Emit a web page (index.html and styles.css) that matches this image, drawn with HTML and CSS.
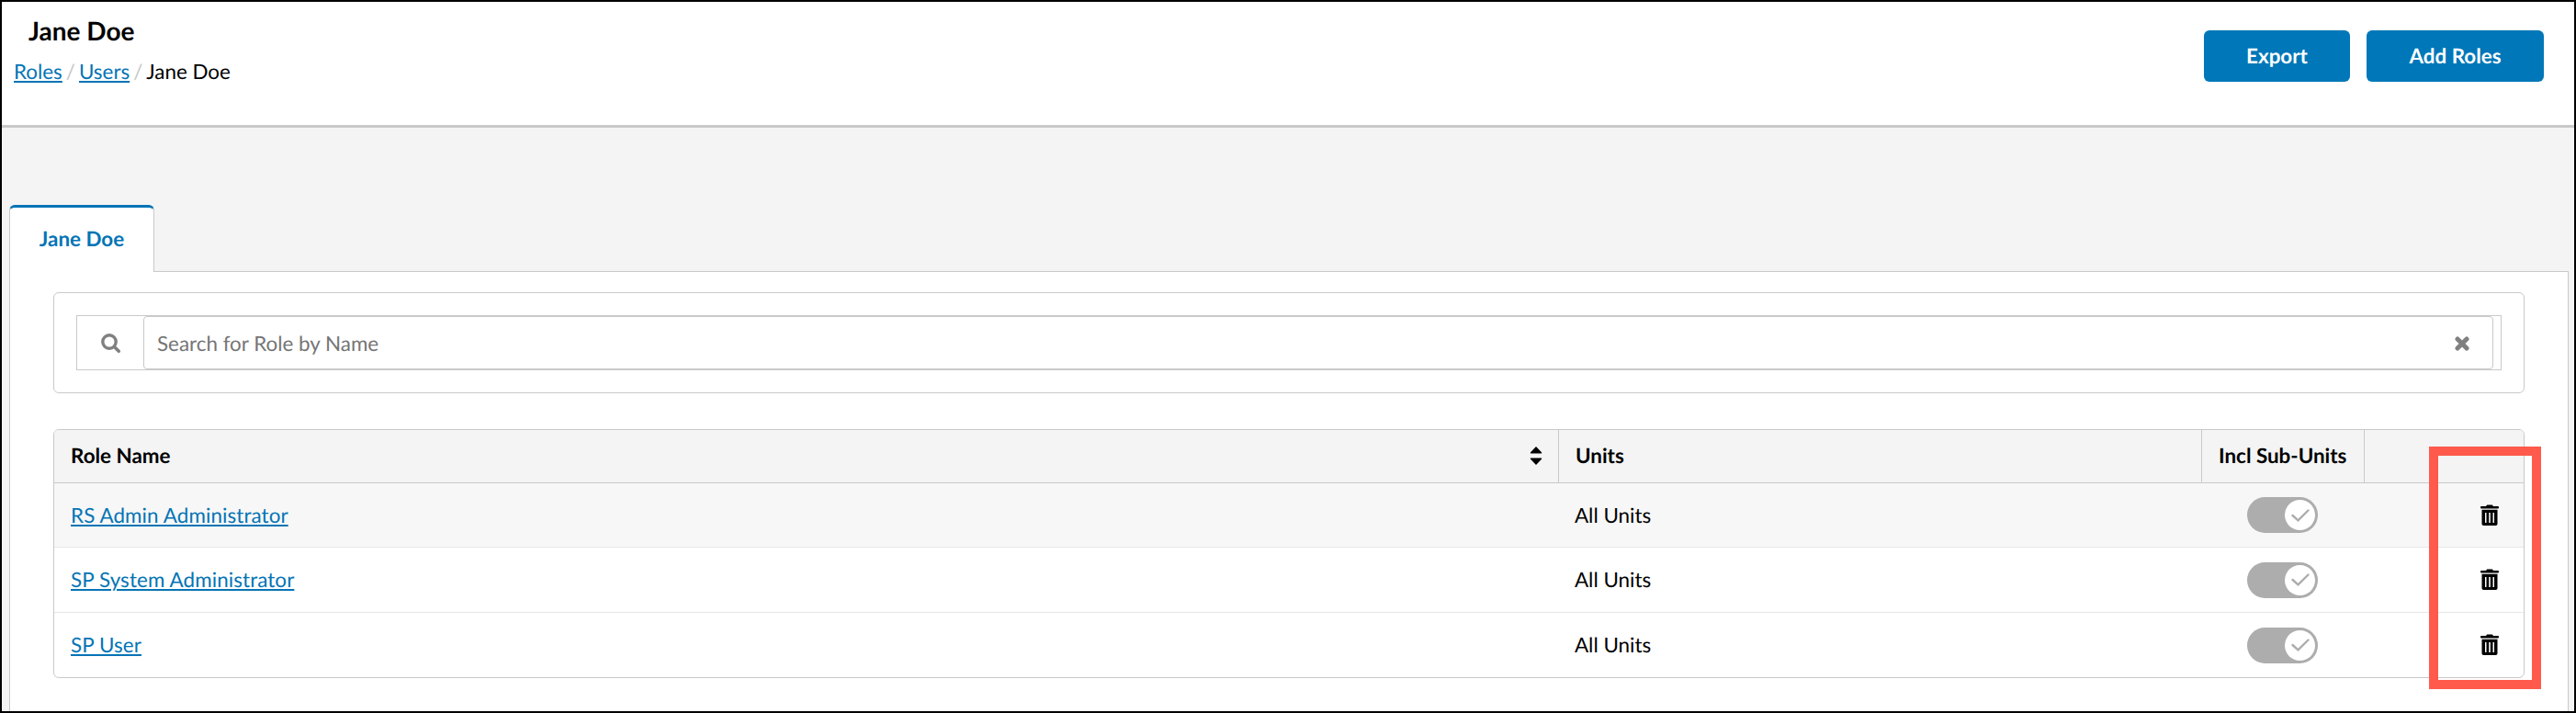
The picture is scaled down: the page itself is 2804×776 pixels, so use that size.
FILE: index.html
```html
<!DOCTYPE html>
<html lang="en">
<head>
    <meta charset="utf-8">
    <title>Jane Doe</title>
    <link rel="stylesheet" href="styles.css">
</head>
<body>
    <svg class="sprite" width="0" height="0">
        <symbol id="icon-trash" viewBox="0 0 20 23">
            <path d="M1 1.9h5L7.2.4h5.6L14 1.9h5a1 1 0 0 1 1 1v.6a1 1 0 0 1-1 1H1a1 1 0 0 1-1-1v-.6a1 1 0 0 1 1-1z"/>
            <path fill-rule="evenodd" d="M1.5 5.8h17v15.4a1.8 1.8 0 0 1-1.8 1.8H3.300a1.8 1.8 0 0 1-1.800-1.8zM5 9v11h1.500V9zm4.200 0v11h1.600V9zm4.300 0v11H15V9z"/>
        </symbol>
        <symbol id="icon-check" viewBox="0 0 20 14">
            <path d="M1.500 7l6 5.300L18.500 1.500" fill="none" stroke="currentColor" stroke-width="2.400" stroke-linecap="round"/>
        </symbol>
    </svg>

    <div class="page">
        <header class="header">
            <div class="heading">
                <h1>Jane Doe</h1>
                <nav class="breadcrumb">
                    <a href="#">Roles</a><span class="slash">/</span><a href="#">Users</a><span class="slash">/</span><span>Jane Doe</span>
                </nav>
            </div>
            <div class="actions">
                <button class="btn btn-export" type="button">Export</button>
                <button class="btn btn-add" type="button">Add Roles</button>
            </div>
        </header>

        <main class="content">
            <div class="tabs">
                <a class="tab">Jane Doe</a>
            </div>
            <div class="panel">
                <div class="search-card">
                    <div class="search">
                        <div class="search-icon">
                            <svg width="22" height="22" viewBox="0 0 22 22">
                                <circle cx="9" cy="9" r="7.2" fill="none" stroke="#808080" stroke-width="3.400"/>
                                <path d="M14.500 14.500l4.800 4.800" stroke="#808080" stroke-width="3.600" stroke-linecap="round"/>
                            </svg>
                        </div>
                        <div class="search-field">
                            <input type="text" placeholder="Search for Role by Name">
                            <svg width="16" height="16" viewBox="0 0 16 16">
                                <path d="M3 3l10 10M13 3L3 13" stroke="#808080" stroke-width="5" stroke-linecap="round"/>
                            </svg>
                        </div>
                    </div>
                </div>

                <div class="table">
                    <div class="row row-head">
                        <div class="cell">
                            Role Name
                            <svg class="sort" width="14" height="20" viewBox="0 0 14 20">
                                <path d="M7 0l6 6.200q.8 1.200-.5 1.200h-11Q.2 7.400 1 6.200zM7 20l6-6.200q.8-1.200-.5-1.200h-11q-1.300 0-.5 1.200z"/>
                            </svg>
                        </div>
                        <div class="cell">Units</div>
                        <div class="cell">Incl Sub-Units</div>
                        <div class="cell"></div>
                    </div>
                    <div class="row row-shaded">
                        <div class="cell"><a href="#">RS Admin Administrator</a></div>
                        <div class="cell">All Units</div>
                        <div class="cell cell-toggle"><span class="toggle"><span class="knob"><svg width="20" height="14"><use href="#icon-check"/></svg></span></span></div>
                        <div class="cell cell-delete"><svg width="20" height="23"><use href="#icon-trash"/></svg></div>
                    </div>
                    <div class="row">
                        <div class="cell"><a href="#">SP System Administrator</a></div>
                        <div class="cell">All Units</div>
                        <div class="cell cell-toggle"><span class="toggle"><span class="knob"><svg width="20" height="14"><use href="#icon-check"/></svg></span></span></div>
                        <div class="cell cell-delete"><svg width="20" height="23"><use href="#icon-trash"/></svg></div>
                    </div>
                    <div class="row">
                        <div class="cell"><a href="#">SP User</a></div>
                        <div class="cell">All Units</div>
                        <div class="cell cell-toggle"><span class="toggle"><span class="knob"><svg width="20" height="14"><use href="#icon-check"/></svg></span></span></div>
                        <div class="cell cell-delete"><svg width="20" height="23"><use href="#icon-trash"/></svg></div>
                    </div>
                    <div class="highlight"></div>
                </div>
            </div>
        </main>
    </div>
</body>
</html>
```

FILE: styles.css
```css
* {
    box-sizing: border-box;
}
body {
    margin: 0;
    font-family: Lato, "Liberation Sans", sans-serif;
    font-size: 22.4px;
    line-height: 28px;
    color: #000;
    text-rendering: geometricPrecision;
}
a {
    color: #0374b5;
    text-decoration-thickness: 2px;
    text-underline-offset: 2px;
}
svg {
    display: block;
    flex: none;
}
.sprite {
    position: absolute;
}
.page {
    display: flex;
    flex-direction: column;
    height: 776px;
    border: 2px solid #000;
    background: #f4f4f4;
    overflow: hidden;
}

/* Header */
.header {
    display: flex;
    justify-content: space-between;
    height: 137px;
    padding: 13px 33px 0 13px;
    background: #fff;
    border-bottom: 3px solid #c9c9c9;
}
h1 {
    margin: 0 0 13px 16px;
    font-size: 28px;
    line-height: 36px;
    font-weight: 700;
}
.breadcrumb {
    display: flex;
}
.slash {
    margin: 0 4px;
    color: #c7c7c7;
}
.actions {
    display: flex;
    gap: 18px;
    padding-top: 18px;
}
.btn {
    height: 56px;
    padding: 0 0 2px;
    border: 0;
    border-radius: 6px;
    background: #0077b8;
    color: #fff;
    font-family: inherit;
    font-size: 22.4px;
    font-weight: 700;
    text-rendering: inherit;
}
.btn-export {
    width: 159px;
}
.btn-add {
    width: 193px;
}

/* Tabs */
.content {
    display: flex;
    flex-direction: column;
    flex: 1;
    padding: 84px 6px 0 8px;
}
.tabs {
    display: flex;
}
.tab {
    width: 158px;
    height: 73px;
    margin-bottom: -1px;
    padding-top: 20px;
    border: 1px solid #c9c9c9;
    border-top: 3px solid #0374b5;
    border-bottom: 0;
    border-radius: 6px 6px 0 0;
    background: #fff;
    text-align: center;
    font-weight: 700;
    z-index: 1;
}
.panel {
    flex: 1;
    padding: 22px 47px 0;
    background: #fff;
    border: 1px solid #c9c9c9;
    border-bottom: 0;
}

/* Search */
.search-card {
    height: 110px;
    padding: 24px;
    border: 1px solid #c9c9c9;
    border-radius: 6px;
}
.search {
    display: flex;
    height: 60px;
    padding-right: 8px;
    border: 1px solid #c9c9c9;
}
.search-icon {
    display: flex;
    align-items: center;
    width: 72px;
    padding: 2px 0 0 26px;
}
.search-field {
    display: flex;
    flex: 1;
    align-items: center;
    padding: 0 25px 0 14px;
    border: 1px solid #c9c9c9;
    border-radius: 4px;
}
.search-field input {
    flex: 1;
    padding: 1px 0 0;
    border: 0;
    outline: 0;
    background: none;
    font: inherit;
    text-rendering: inherit;
}
.search-field input::placeholder {
    color: #757575;
}
.search-field svg {
    margin-top: 2px;
}

/* Roles table */
.table {
    position: relative;
    margin-top: 39px;
    border: 1px solid #c9c9c9;
    border-radius: 6px;
}
.row {
    display: grid;
    grid-template-columns: 1638px 700px 177px 1fr;
    height: 71px;
    border-bottom: 1px solid #e8e8e8;
}
.row:nth-child(4) {
    height: 70px;
    border-bottom: 0;
}
.cell {
    display: flex;
    align-items: center;
    padding: 0 18px 1px 17px;
}
.cell a {
    padding-left: 1px;
    letter-spacing: 0.1px;
}
.row-head {
    height: 58px;
    background: #f4f4f4;
    border-bottom-color: #c9c9c9;
    border-radius: 5px 5px 0 0;
    font-weight: 700;
}
.row-head .cell {
    padding: 0 17px 1px 18px;
    border-right: 1px solid #c9c9c9;
}
.row-head .cell:last-child {
    border-right: 0;
}
.row-shaded {
    height: 70px;
    background: #f7f7f7;
}
.row-shaded .cell {
    padding-bottom: 0;
}
.sort {
    margin-left: auto;
}
.cell.cell-toggle {
    justify-content: center;
    padding: 0 2px 0 0;
}
.toggle {
    display: flex;
    align-items: center;
    justify-content: flex-end;
    width: 77px;
    height: 39px;
    padding-right: 3px;
    border-radius: 20px;
    background: #adadad;
}
.knob {
    display: flex;
    align-items: center;
    justify-content: center;
    width: 33px;
    height: 33px;
    border-radius: 50%;
    background: #fff;
    color: #adadad;
}
.cell-delete {
    justify-content: flex-end;
    padding-right: 27px;
}
/* Callout around the delete column */
.highlight {
    position: absolute;
    top: 18px;
    right: -19px;
    width: 122px;
    height: 264px;
    border: 10px solid #ff5a4c;
}
```
